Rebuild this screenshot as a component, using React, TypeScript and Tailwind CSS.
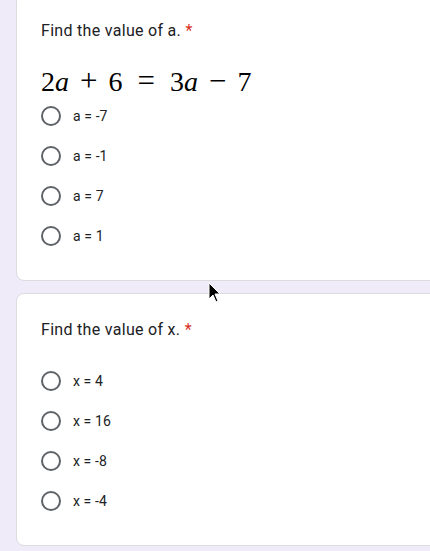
import React from "react";

const Radio = ({ label }: { label: string }) => (
  <div className="flex h-[40px] items-center">
    <div className="h-[20px] w-[20px] rounded-full border-2 border-[#5f6368]" />
    <span className="ml-[12px] text-[14px] tracking-[0.1px] text-[#202124]">{label}</span>
  </div>
);

const Title = ({ text }: { text: string }) => (
  <div className="h-[24px] text-[16px] leading-[24px] tracking-[0.3px] text-[#202124]">
    {text} <span className="text-[#d93025]">*</span>
  </div>
);

export default function App() {
  return (
    <div
      className="relative h-[551px] w-[430px] overflow-hidden bg-[#f0ebf8]"
      style={{ fontFamily: "Roboto, 'Liberation Sans', sans-serif" }}
    >
      <div className="pl-[16px]">
        <div className="-mt-[6px] w-[640px] rounded-lg border border-[#dadce0] bg-white pl-[24px] pt-[24px] pb-[24px]">
          <Title text="Find the value of a." />
          <div
            className="mt-[24px] flex h-[29px] items-center text-[28px] text-black"
            style={{ fontFamily: "'Liberation Serif', 'Times New Roman', serif" }}
          >
            <span>2</span>
            <span className="italic">a</span>
            <span className="mx-[11px] text-[31px]">+</span>
            <span>6</span>
            <span className="mx-[15px] text-[31px]">=</span>
            <span>3</span>
            <span className="italic">a</span>
            <span className="mx-[11px] text-[31px]">−</span>
            <span>7</span>
          </div>
          <Radio label="a = -7" />
          <Radio label="a = -1" />
          <Radio label="a = 7" />
          <Radio label="a = 1" />
        </div>
        <div className="mt-[12px] w-[640px] rounded-lg border border-[#dadce0] bg-white pl-[24px] pt-[24px] pb-[24px]">
          <Title text="Find the value of x." />
          <div className="h-[19px]" />
          <Radio label="x = 4" />
          <Radio label="x = 16" />
          <Radio label="x = -8" />
          <Radio label="x = -4" />
        </div>
      </div>
      <svg
        className="absolute left-[208px] top-[282px]"
        width="14"
        height="22"
        viewBox="0 0 14 22"
      >
        <path
          d="M1 1 L1 17 L5 13 L8 20 L10 19 L7 12 L12 12 Z"
          fill="#000"
          stroke="#fff"
          strokeWidth="1"
        />
      </svg>
    </div>
  );
}
